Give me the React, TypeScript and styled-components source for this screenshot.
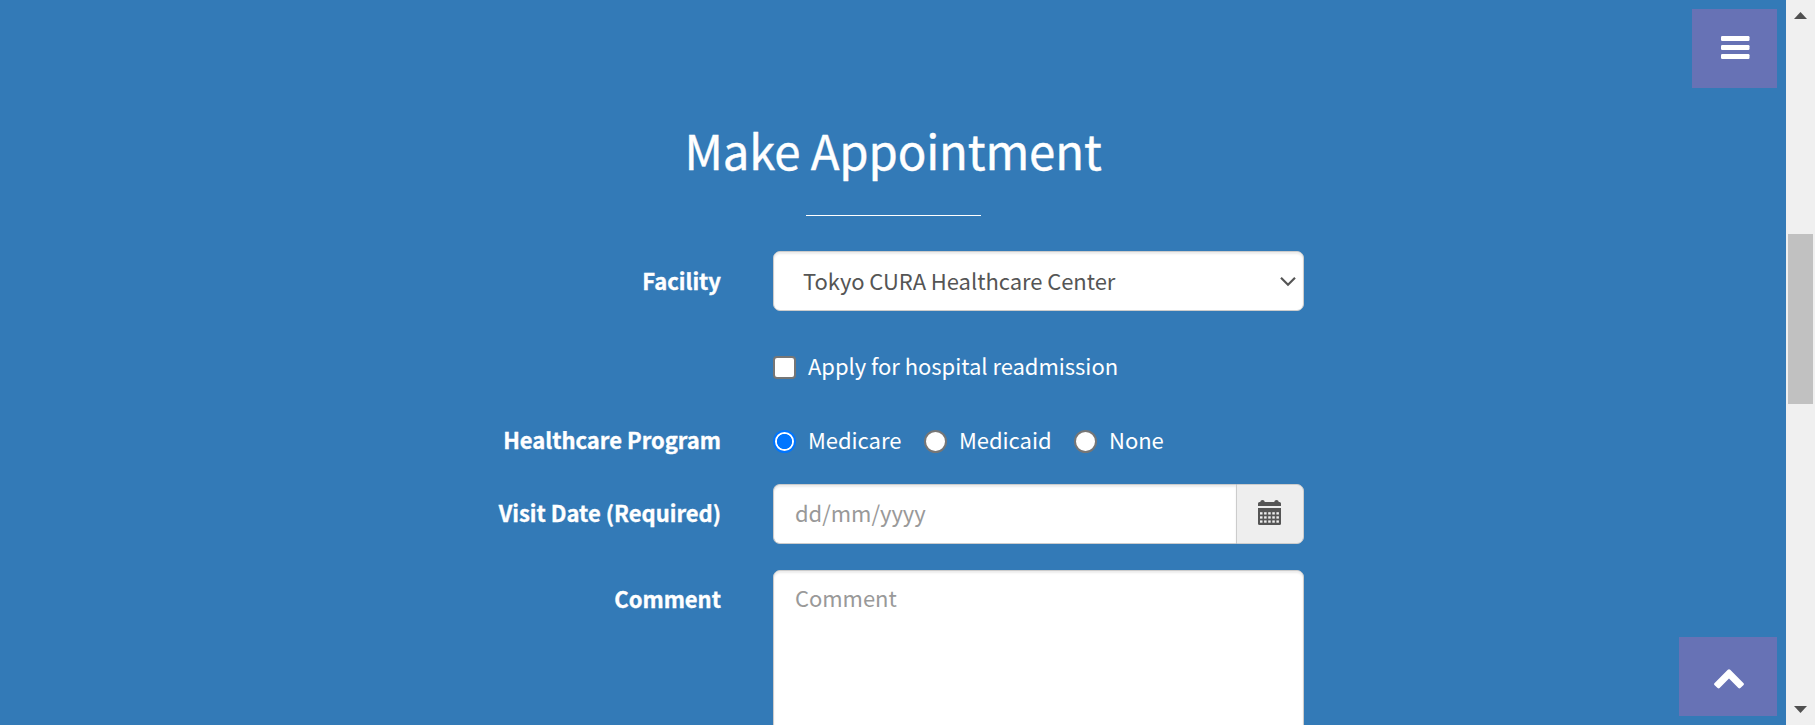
import React from "react";
import styled, { createGlobalStyle } from "styled-components";

const GlobalStyle = createGlobalStyle`
  * { box-sizing: border-box; }
  body {
    margin: 0;
    overflow: hidden;
    background: #337ab7;
    color: #fff;
    font-family: "Noto Sans CJK SC", "Open Sans", sans-serif;
    font-size: 22px;
  }
`;

const Page = styled.div`
  position: relative;
  display: flex;
  height: 725px;
  overflow: hidden;
`;

const Content = styled.main`
  flex: 1;
  display: flex;
  flex-direction: column;
  align-items: center;
  padding-top: 116px;
`;

const Title = styled.h2`
  margin: 0;
  font-size: 47.3px;
  font-weight: 400;
  line-height: 68px;
  letter-spacing: -0.14px;
  -webkit-text-stroke: 0.4px #fff;
`;

const Rule = styled.hr`
  width: 175px;
  height: 1px;
  margin: 31px 0 35px;
  border: 0;
  background: #fff;
`;

const Form = styled.form`
  width: 822px;
  display: flex;
  flex-direction: column;
`;

const Row = styled.div<{ $gap?: number; $height?: number }>`
  display: grid;
  grid-template-columns: 239px 531px;
  column-gap: 52px;
  align-items: center;
  margin-top: ${(p) => p.$gap ?? 0}px;
  height: ${(p) => p.$height ?? 60}px;
`;

const Label = styled.span<{ $line?: number }>`
  grid-column: 1;
  text-align: right;
  font-weight: 700;
  line-height: ${(p) => p.$line ?? 56}px;
  white-space: nowrap;
  align-self: start;
  -webkit-text-stroke: 0.35px #fff;
`;

const Field = styled.div`
  grid-column: 2;
  align-self: start;
  position: relative;
  display: flex;
`;

const control = `
  font: inherit;
  letter-spacing: -0.05px;
  width: 100%;
  margin: 0;
  color: #555;
  background: #fff;
  border: 1px solid #ccc;
  border-radius: 7px;
  outline: none;
  box-shadow: inset 0 2px 2px rgba(0, 0, 0, 0.075);
  &::placeholder { color: #999; opacity: 1; }
`;

const Select = styled.select`
  ${control}
  appearance: none;
  height: 60px;
  padding: 0 29px 2px;
`;

const SelectArrow = styled.svg`
  position: absolute;
  right: 8px;
  top: 25px;
  width: 16px;
  height: 11px;
`;

const DateInput = styled.input`
  ${control}
  height: 60px;
  padding: 0 21px 5px;
  flex: 1;
  min-width: 0;
  border-right: 0;
  border-radius: 7px 0 0 7px;
`;

const Addon = styled.span`
  width: 68px;
  height: 60px;
  display: flex;
  align-items: center;
  justify-content: center;
  padding: 0 1px 3px 0;
  background: #eee;
  border: 1px solid #ccc;
  border-radius: 0 7px 7px 0;
`;

const TextArea = styled.textarea`
  ${control}
  height: 367px;
  padding: 9px 21px;
  line-height: 35px;
  resize: none;
`;

const Choices = styled.div`
  grid-column: 2;
  display: flex;
  align-items: center;
  height: 48px;
`;

const Choice = styled.label<{ $width?: number }>`
  display: flex;
  align-items: center;
  width: ${(p) => (p.$width ? `${p.$width}px` : "auto")};
  gap: 12px;
  line-height: 45px;
  padding-bottom: 3px;
  letter-spacing: -0.03px;
  white-space: nowrap;
`;

const Check = styled.input`
  appearance: none;
  flex: none;
  width: 23px;
  height: 23px;
  margin: 3px 0 0;
  background: #fff;
  border: 2px solid #767676;
  border-radius: 4px;
`;

const Radio = styled(Check)`
  border-radius: 50%;
  &:checked {
    border-color: #0075ff;
    background: radial-gradient(circle closest-side, #0075ff 0 7.2px, #fff 8px) center / 21px 21px;
  }
`;

const CornerButton = styled.button<{ $corner: "top" | "bottom"; $width: number }>`
  position: absolute;
  right: 38px;
  ${(p) => (p.$corner === "top" ? "top: 9px;" : "top: 637px;")}
  width: ${(p) => p.$width}px;
  height: 79px;
  display: flex;
  align-items: center;
  justify-content: center;
  padding: ${(p) => (p.$corner === "top" ? "0 0 2px 2px" : "4px 0 0 1px")};
  border: 0;
  background: #6772b5;
`;

const ScrollTrack = styled.aside`
  width: 29px;
  display: flex;
  flex-direction: column;
  align-items: center;
  justify-content: space-between;
  padding: 12px 0;
  background: #f0f0f0;
`;

const ScrollRail = styled.div`
  flex: 1;
  padding-top: 215px;
`;

const ScrollThumb = styled.div`
  width: 25px;
  height: 170px;
  background: #c1c1c1;
`;

const CalendarIcon = () => (
  <svg width="23" height="25" viewBox="0 0 23 25" fill="#555">
    <path d="M0 6V3.5Q0 2 1.5 2H2.2Q2.5 0 4.5 0T6.8 2H16.2Q16.5 0 18.5 0T20.8 2H21.5Q23 2 23 3.5V6Z" />
    <path d="M0 8H23V23.5Q23 25 21.5 25H1.5Q0 25 0 23.5Z" />
    <g fill="#eee">
      {[12.2, 16.3, 20.4].map((y) =>
        [2, 6.1, 10.2, 14.3, 18.4].map((x) => (
          <rect key={`${x}-${y}`} x={x} y={y} width="2.5" height="2.3" />
        ))
      )}
    </g>
  </svg>
);

export default function App() {
  return (
    <>
      <GlobalStyle />
      <Page>
        <Content>
          <Title>Make Appointment</Title>
          <Rule />
          <Form>
            <Row>
              <Label $line={58}>Facility</Label>
              <Field>
                <Select defaultValue="tokyo" aria-label="Facility">
                  <option value="tokyo">Tokyo CURA Healthcare Center</option>
                </Select>
                <SelectArrow viewBox="0 0 16 11" fill="none" stroke="#555" strokeWidth="2.2">
                  <path d="M1 1.7L8 8.7L15 1.7" />
                </SelectArrow>
              </Field>
            </Row>
            <Row $gap={32} $height={48}>
              <Choices>
                <Choice>
                  <Check type="checkbox" />
                  Apply for hospital readmission
                </Choice>
              </Choices>
            </Row>
            <Row $gap={26} $height={48}>
              <Label $line={44}>Healthcare Program</Label>
              <Choices>
                <Choice $width={151}>
                  <Radio type="radio" name="program" defaultChecked />
                  Medicare
                </Choice>
                <Choice $width={150}>
                  <Radio type="radio" name="program" />
                  Medicaid
                </Choice>
                <Choice>
                  <Radio type="radio" name="program" />
                  None
                </Choice>
              </Choices>
            </Row>
            <Row $gap={19}>
              <Label>Visit Date (Required)</Label>
              <Field>
                <DateInput placeholder="dd/mm/yyyy" />
                <Addon>
                  <CalendarIcon />
                </Addon>
              </Field>
            </Row>
            <Row $gap={26}>
              <Label>Comment</Label>
              <Field>
                <TextArea placeholder="Comment" />
              </Field>
            </Row>
          </Form>
        </Content>
        <ScrollTrack>
          <svg width="13" height="7" viewBox="0 0 13 7" fill="#505050">
            <path d="M0 7L6.5 0L13 7Z" />
          </svg>
          <ScrollRail>
            <ScrollThumb />
          </ScrollRail>
          <svg width="13" height="7" viewBox="0 0 13 7" fill="#505050">
            <path d="M0 0L6.5 7L13 0Z" />
          </svg>
        </ScrollTrack>
        <CornerButton $corner="top" $width={85} aria-label="Menu">
          <svg width="29" height="23" viewBox="0 0 29 23" fill="#fff">
            <rect width="28.5" height="5" rx="1.2" />
            <rect y="9" width="28.5" height="5" rx="1.2" />
            <rect y="18" width="28.5" height="5" rx="1.2" />
          </svg>
        </CornerButton>
        <CornerButton $corner="bottom" $width={98} aria-label="Back to top">
          <svg width="30" height="20" viewBox="0 0 30 20" fill="#fff">
            <path d="M.4 14.2L13.8.7Q15 -.4 16.2.7L29.6 14.2Q30.3 15 29.6 15.9L26.4 19Q25.4 19.8 24.4 19L15 9.6L5.6 19Q4.6 19.8 3.6 19L.4 15.9Q-.3 15 .4 14.2Z" />
          </svg>
        </CornerButton>
      </Page>
    </>
  );
}
